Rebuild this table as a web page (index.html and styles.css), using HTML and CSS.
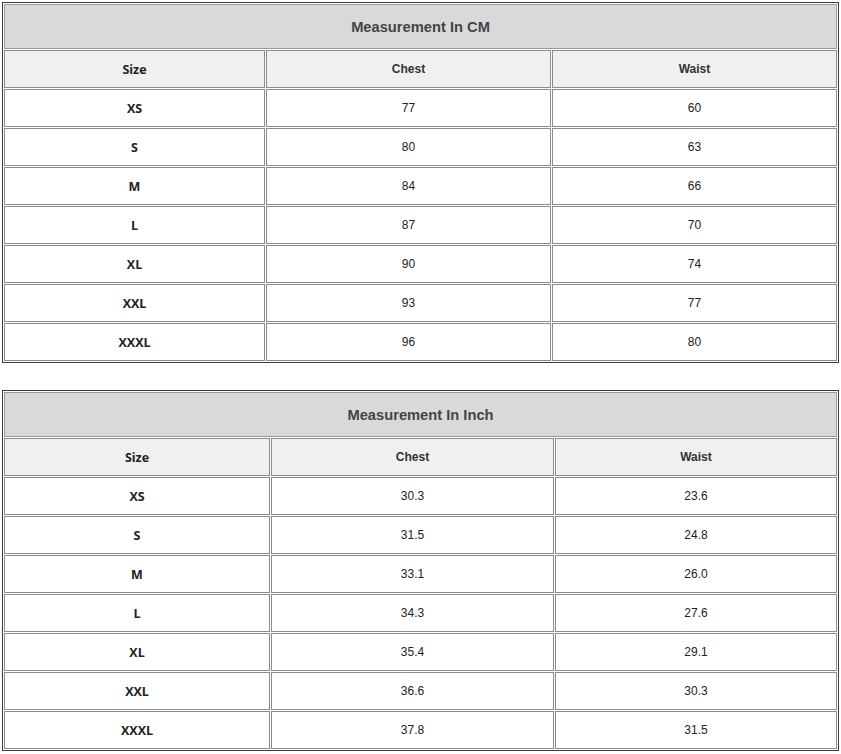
FILE: index.html
```html
<!DOCTYPE html>
<html>
<head>
<meta charset="utf-8">
<link rel="stylesheet" href="styles.css">
</head>
<body>
<div class="page">
  <table class="size-table cm">
    <colgroup><col class="c1"><col class="c2"><col class="c3"></colgroup>
    <tr class="title-row"><td colspan="3" class="title">Measurement In CM</td></tr>
    <tr class="head-row"><td class="size">Size</td><td class="hd">Chest</td><td class="hd">Waist</td></tr>
    <tr><td class="size">XS</td><td>77</td><td>60</td></tr>
    <tr><td class="size">S</td><td>80</td><td>63</td></tr>
    <tr><td class="size">M</td><td>84</td><td>66</td></tr>
    <tr><td class="size">L</td><td>87</td><td>70</td></tr>
    <tr><td class="size">XL</td><td>90</td><td>74</td></tr>
    <tr><td class="size">XXL</td><td>93</td><td>77</td></tr>
    <tr><td class="size">XXXL</td><td>96</td><td>80</td></tr>
  </table>

  <table class="size-table inch">
    <colgroup><col class="c1"><col class="c2"><col class="c3"></colgroup>
    <tr class="title-row"><td colspan="3" class="title">Measurement In Inch</td></tr>
    <tr class="head-row"><td class="size">Size</td><td class="hd">Chest</td><td class="hd">Waist</td></tr>
    <tr><td class="size">XS</td><td>30.3</td><td>23.6</td></tr>
    <tr><td class="size">S</td><td>31.5</td><td>24.8</td></tr>
    <tr><td class="size">M</td><td>33.1</td><td>26.0</td></tr>
    <tr><td class="size">L</td><td>34.3</td><td>27.6</td></tr>
    <tr><td class="size">XL</td><td>35.4</td><td>29.1</td></tr>
    <tr><td class="size">XXL</td><td>36.6</td><td>30.3</td></tr>
    <tr><td class="size">XXXL</td><td>37.8</td><td>31.5</td></tr>
  </table>
</div>
</body>
</html>
```
FILE: styles.css
```css
html, body {
  margin: 0;
  padding: 0;
  background: #ffffff;
}
.page {
  padding: 2px 2px 0 2px;
}
.size-table {
  width: 837px;
  table-layout: fixed;
  border-collapse: separate;
  border-spacing: 1px;
  border: 1px solid #3c3c3c;
  font-family: "Liberation Sans", Arial, sans-serif;
  font-size: 12px;
  color: #222222;
}
.size-table + .size-table {
  margin-top: 27px;
}
.cm .c1 { width: 261px; }
.cm .c2 { width: 285px; }
.cm .c3 { width: 285px; }
.inch .c1 { width: 266px; }
.inch .c2 { width: 283px; }
.inch .c3 { width: 282px; }
.size-table td {
  box-sizing: border-box;
  border: 1px solid #8c8c8c;
  text-align: center;
  vertical-align: middle;
  padding: 0;
  background: #ffffff;
}
.size-table tr {
  height: 38px;
}
.size-table .title-row {
  height: 45px;
}
.size-table td.title {
  background: #d9d9d9;
  border-color: #9a9a9a;
  font-weight: bold;
  font-size: 14.7px;
  color: #444444;
}
.size-table .head-row td {
  background: #f0f0f0;
}
.size-table td.hd {
  font-weight: bold;
  color: #333333;
}
.size-table td.size {
  font-family: "Open Sans", "Noto Sans", sans-serif;
  font-weight: bold;
  font-size: 12.5px;
  color: #222222;
}
```
